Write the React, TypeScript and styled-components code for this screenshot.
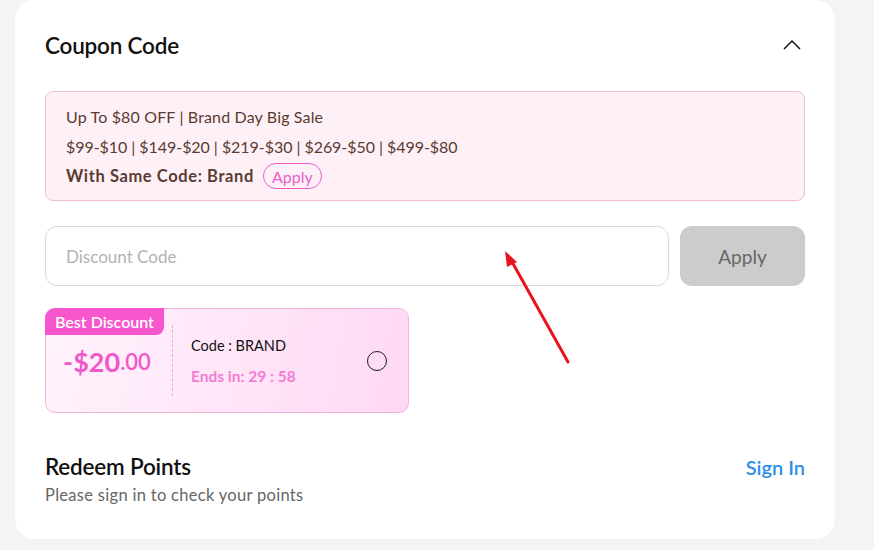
import React from 'react';
import styled, { createGlobalStyle } from 'styled-components';

const GlobalStyle = createGlobalStyle`
  html, body {
    margin: 0;
    padding: 0;
    background: #f4f4f4;
    font-family: Lato, "Noto Sans", sans-serif;
  }
  * { box-sizing: border-box; }
`;

const Page = styled.div`
  position: relative;
  width: 874px;
  height: 550px;
  overflow: hidden;
`;

const Card = styled.div`
  margin-left: 15px;
  width: 820px;
  height: 539px;
  background: #fff;
  border-radius: 20px;
  padding: 28px 30px 0;
`;

const HeadRow = styled.div`
  display: flex;
  align-items: center;
  justify-content: space-between;
  height: 34px;
`;

const Title = styled.h2`
  margin: 0;
  font-size: 22.5px;
  font-weight: 600;
  color: #111;
  letter-spacing: -0.2px;
`;

const Chevron = styled.svg`
  width: 20px;
  height: 20px;
  margin-right: 3px;
`;

const Promo = styled.div`
  margin-top: 29px;
  background: #fdf1f7;
  border: 1px solid #f0bcd8;
  border-radius: 8px;
  padding: 9px 20px 9px;
  color: #5b3b2f;
  font-size: 16px;
`;

const PromoLine = styled.div<{ $bold?: boolean; $spacing?: string }>`
  height: 30px;
  display: flex;
  align-items: center;
  gap: 9px;
  font-weight: ${p => (p.$bold ? 700 : 400)};
  font-size: ${p => (p.$bold ? '16.5px' : '16px')};
  letter-spacing: ${p => p.$spacing ?? '0.15px'};
`;

const PillButton = styled.button`
  height: 26px;
  padding: 0 8px;
  border: 1px solid #ea5fcd;
  border-radius: 13px;
  background: transparent;
  color: #ea5fcd;
  font-family: inherit;
  font-size: 16px;
  letter-spacing: 0;
  cursor: pointer;
`;

const InputRow = styled.div`
  margin-top: 25px;
  display: flex;
  gap: 11px;
  height: 60px;
`;

const CodeInput = styled.input`
  flex: 1;
  height: 100%;
  border: 1px solid #d8d8d8;
  border-radius: 12px;
  padding: 0 20px;
  font-family: inherit;
  font-size: 17px;
  color: #333;
  outline: none;
  &::placeholder { color: #b3b3b3; }
`;

const ApplyButton = styled.button`
  width: 125px;
  height: 100%;
  border: none;
  border-radius: 12px;
  background: #cccccc;
  color: #666;
  font-family: inherit;
  font-size: 19px;
`;

const Coupon = styled.div`
  position: relative;
  margin-top: 22px;
  width: 364px;
  height: 105px;
  border: 1px solid #f3b3dd;
  border-radius: 10px;
  background: linear-gradient(100deg, #fff3fc 0%, #ffe6f8 50%, #ffd8f4 100%);
  display: flex;
  align-items: stretch;
`;

const Badge = styled.div`
  position: absolute;
  left: -1px;
  top: -1px;
  height: 27px;
  padding: 0 10px;
  display: flex;
  align-items: center;
  background: #f756cc;
  color: #fff;
  font-size: 16px;
  font-weight: 600;
  border-radius: 10px 0 8px 0;
`;

const Price = styled.div`
  width: 126px;
  display: flex;
  align-items: center;
  justify-content: center;
  padding-top: 2px;
  padding-right: 4px;
  color: #f058c9;
  font-weight: 700;
  font-size: 27px;
  small { font-size: 22px; font-weight: 600; }
`;

const Divider = styled.div`
  margin: 16px 0;
  border-left: 1px dashed #f0a8d5;
`;

const Details = styled.div`
  flex: 1;
  display: flex;
  flex-direction: column;
  justify-content: center;
  padding-left: 18px;
`;

const CodeText = styled.div`
  height: 30px;
  display: flex;
  align-items: center;
  font-size: 14.5px;
  color: #111;
`;

const Ends = styled.div`
  height: 30px;
  display: flex;
  align-items: center;
  font-size: 15.5px;
  font-weight: 700;
  color: #f27dd3;
`;

const Radio = styled.span`
  align-self: center;
  width: 20px;
  height: 20px;
  margin-right: 21px;
  border: 1.6px solid #1a1a2a;
  border-radius: 50%;
`;

const Redeem = styled.div`
  margin-top: 39px;
  display: flex;
  justify-content: space-between;
  align-items: flex-start;
`;

const RedeemTitle = styled.div`
  font-size: 22.5px;
  font-weight: 600;
  color: #111;
  line-height: 30px;
  letter-spacing: -0.2px;
`;

const RedeemSub = styled.div`
  font-size: 16.5px;
  color: #666;
  line-height: 27px;
  letter-spacing: 0.3px;
`;

const SignIn = styled.a`
  font-size: 20px;
  font-weight: 600;
  color: #2f8fe8;
  line-height: 30px;
  text-decoration: none;
`;

const Arrow = styled.svg`
  position: absolute;
  left: 0;
  top: 0;
  pointer-events: none;
`;

export default function App() {
  return (
    <Page>
      <GlobalStyle />
      <Card>
        <HeadRow>
          <Title>Coupon Code</Title>
          <Chevron viewBox="0 0 20 20">
            <path d="M2 14 L10 6 L18 14" fill="none" stroke="#111" strokeWidth="1.5" />
          </Chevron>
        </HeadRow>
        <Promo>
          <PromoLine>Up To $80 OFF | Brand Day Big Sale</PromoLine>
          <PromoLine $spacing="-0.05px">$99-$10 | $149-$20 | $219-$30 | $269-$50 | $499-$80</PromoLine>
          <PromoLine $bold $spacing="0.6px">
            With Same Code: Brand <PillButton>Apply</PillButton>
          </PromoLine>
        </Promo>
        <InputRow>
          <CodeInput placeholder="Discount Code" />
          <ApplyButton>Apply</ApplyButton>
        </InputRow>
        <Coupon>
          <Badge>Best Discount</Badge>
          <Price>
            -$20<small>.00</small>
          </Price>
          <Divider />
          <Details>
            <CodeText>Code : BRAND</CodeText>
            <Ends>Ends in: 29 : 58</Ends>
          </Details>
          <Radio />
        </Coupon>
        <Redeem>
          <div>
            <RedeemTitle>Redeem Points</RedeemTitle>
            <RedeemSub>Please sign in to check your points</RedeemSub>
          </div>
          <SignIn href="#">Sign In</SignIn>
        </Redeem>
      </Card>
      <Arrow width="874" height="550" viewBox="0 0 874 550">
        <line x1="568" y1="362" x2="511" y2="260" stroke="#e8141c" strokeWidth="3" strokeLinecap="round" />
        <polygon points="505,251 517,262 507,267" fill="#e8141c" />
      </Arrow>
    </Page>
  );
}
